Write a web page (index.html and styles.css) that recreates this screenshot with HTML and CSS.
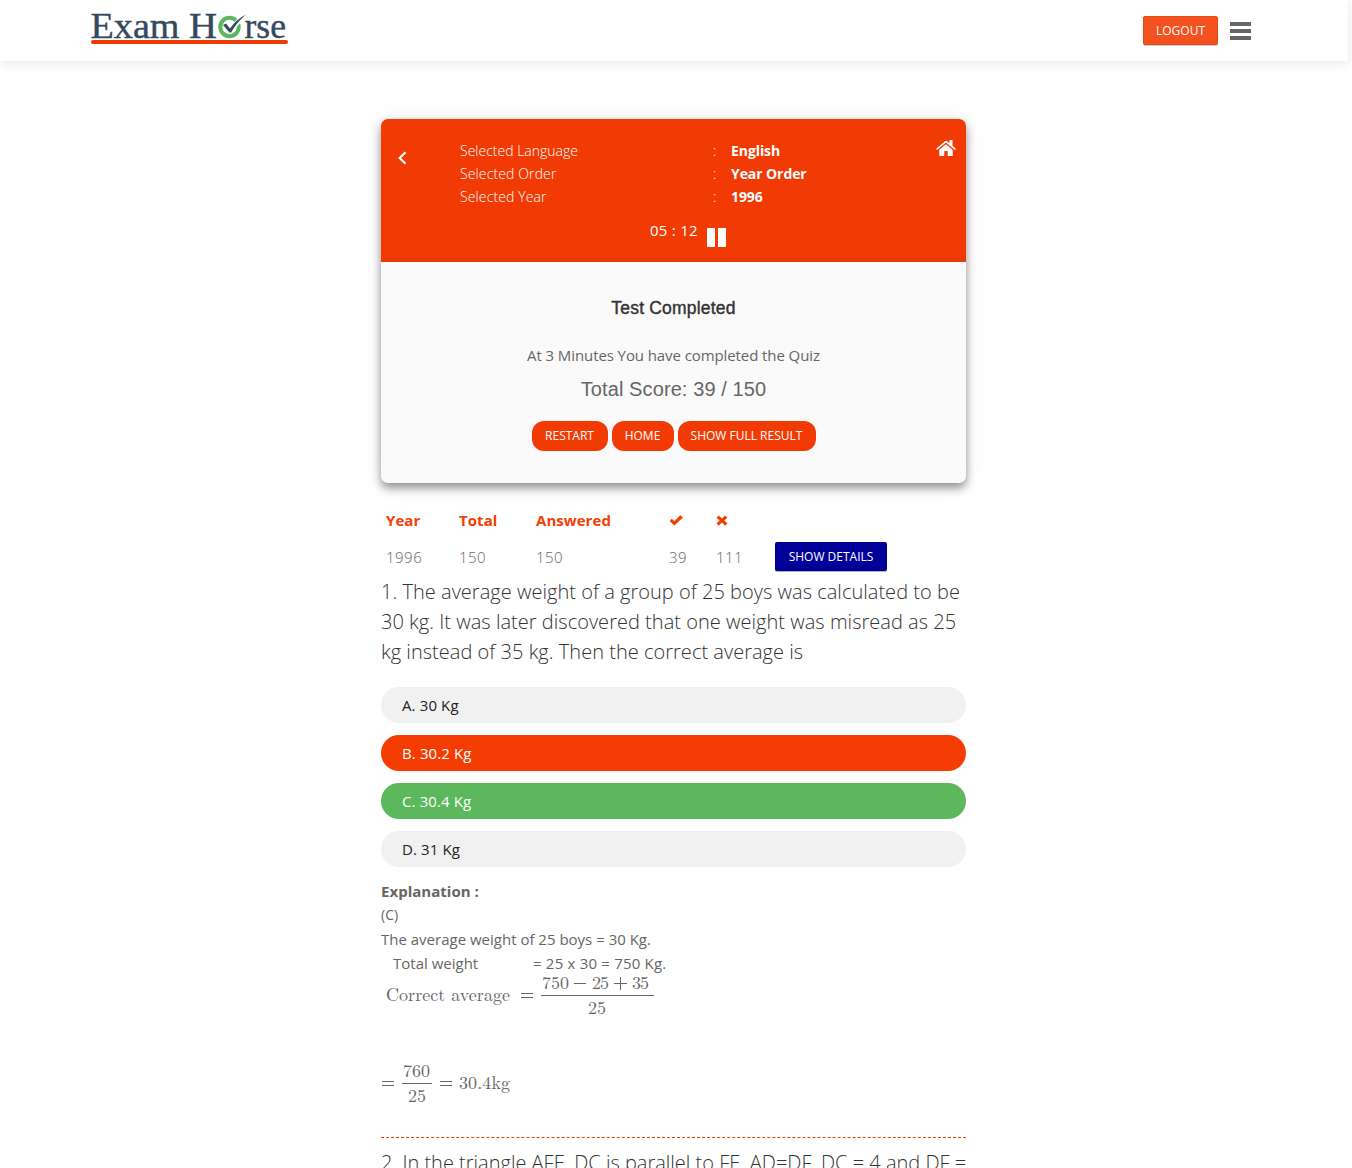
FILE: index.html
```html
<!DOCTYPE html>
<html lang="en">
<head>
<meta charset="utf-8">
<title>Exam Horse</title>
<link rel="stylesheet" href="styles.css">
</head>
<body>
<header class="topbar">
  <svg class="logo" width="200" height="38" viewBox="0 0 200 38" role="img" aria-label="Exam Horse">
    <g class="logo-text">
      <text x="-0.500" y="29.5" textLength="89" lengthAdjust="spacingAndGlyphs">Exam</text>
      <text x="98" y="29.5" textLength="28" lengthAdjust="spacingAndGlyphs">H</text>
      <text x="153.500" y="29.5" textLength="41.500" lengthAdjust="spacingAndGlyphs">rse</text>
    </g>
    <circle cx="138.5" cy="19" r="9.2" fill="none" stroke="#5cb85c" stroke-width="4"/>
    <path d="M141 20L154 6.500" stroke="#fff" stroke-width="5"/>
    <path d="M132 17l3-1.500 4 5Q145 11.500 155 6.500 146 14 140 24.500h-1.500z" fill="#34495e"/>
    <path d="M2 34H195" stroke="#f23a04" stroke-width="4" stroke-linecap="round"/>
  </svg>
  <div class="top-actions">
    <button class="btn logout">LOGOUT</button>
    <svg class="menu" width="21" height="18" viewBox="0 0 21 18"><path d="M0 0h21v4H0zM0 7h21v4H0zM0 14h21v4H0z" fill="#666"/></svg>
  </div>
</header>

<main class="content">
  <section class="card">
    <div class="card-head">
      <svg class="back" width="9" height="14" viewBox="0 0 9 14"><path d="M7.500 1.200L1.700 7l5.800 5.800" fill="none" stroke="#fff" stroke-width="2.200"/></svg>
      <div class="summary">
        <dl class="selection">
          <dt>Selected Language</dt><dd class="colon">:</dd><dd>English</dd>
          <dt class="wide">Selected Order</dt><dd class="colon">:</dd><dd>Year Order</dd>
          <dt class="wide">Selected Year</dt><dd class="colon">:</dd><dd>1996</dd>
        </dl>
        <div class="timer">
          <span>05 : 12</span>
          <svg width="20" height="19" viewBox="0 0 20 19"><path d="M0 0h8v18.500l-.5.5H.5l-.5-.5zM11 0h8v18.500l-.5.5h-7l-.5-.5z" fill="#fff"/></svg>
        </div>
      </div>
      <svg class="home" width="20" height="17" viewBox="0 0 20 17"><path d="M10 4.200l6.700 5.500V16h-5v-5H8.300v5h-5V9.700zM0 8.700L9 1.200q1-.8 2 0l2.500 2.100V0h3v5.800L20 8.700l-1 1.200-9-7.300-9 7.300z" fill="#fff"/></svg>
    </div>
    <div class="card-body">
      <h4>Test Completed</h4>
      <p class="done">At 3 Minutes You have completed the Quiz</p>
      <p class="score">Total Score: 39 / 150</p>
      <div class="actions">
        <button class="btn pill">RESTART</button>
        <button class="btn pill home-btn">HOME</button>
        <button class="btn pill full-btn">SHOW FULL RESULT</button>
      </div>
    </div>
  </section>

  <div class="results">
    <div class="row head">
      <span>Year</span><span>Total</span><span>Answered</span>
      <span><svg width="14" height="11" viewBox="0 0 14 11"><path d="M.6 6l2.200-2.200 2.500 2.400L11.300.3l2.700 2.200-8.700 8z" fill="#f53d03"/></svg></span>
      <span><svg width="12" height="11" viewBox="0 0 12 11"><path d="M.5 2.700L2.700.5 6 3.600 9.200.5l2.200 2.200-3.100 2.900 3.100 3L9.200 10.800 6 7.600 2.700 10.800.5 8.600l3.100-3z" fill="#f53d03"/></svg></span>
    </div>
    <div class="row">
      <span>1996</span><span>150</span><span>150</span><span>39</span><span>111</span>
      <button class="btn details">SHOW DETAILS</button>
    </div>
  </div>

  <article>
    <h2 class="question">1. The average weight of a group of 25 boys was calculated to be<br>30 kg. It was later discovered that one weight was misread as 25<br>kg instead of 35 kg. Then the correct average is</h2>
    <ul class="options">
      <li>A. 30 Kg</li>
      <li class="wrong">B. 30.2 Kg</li>
      <li class="right">C. 30.4 Kg</li>
      <li>D. 31 Kg</li>
    </ul>
    <div class="explanation">
      <p class="exp-title">Explanation :</p>
      <p class="exp-key">(C)</p>
      <p>The average weight of 25 boys = 30 Kg.</p>
      <p class="total"><span>Total weight</span><span class="sum">= 25 x 30 = 750 Kg.</span></p>
      <svg class="math" width="290" height="44" viewBox="0 0 290 44">
        <text x="5" y="26" textLength="124">Correct average</text>
        <path d="M140 18.500h12M140 22.500h12M160 20.500h113" stroke="#666"/>
        <text x="161" y="14" textLength="27">750</text>
        <path d="M193 8.500h12M233 8.500h13M239.500 2v13" stroke="#666"/>
        <text x="211" y="14" textLength="17">25</text>
        <text x="251" y="14" textLength="17">35</text>
        <text x="207" y="39" textLength="18">25</text>
      </svg>
      <svg class="math second" width="290" height="44" viewBox="0 0 290 44">
        <path d="M1 18.500h12M1 22.500h12M21 20.500h30M59 18.500h12M59 22.500h12" stroke="#666"/>
        <text x="22" y="14" textLength="27">760</text>
        <text x="27" y="39" textLength="18">25</text>
        <text x="78" y="26" textLength="51">30.4kg</text>
      </svg>
    </div>
  </article>

  <article class="next">
    <h2 class="question">2. In the triangle AFE, DC is parallel to FE, AD=DF, DC = 4 and DF =</h2>
  </article>
</main>
</body>
</html>
```
FILE: styles.css
```css
* { box-sizing: border-box; }
html { overflow: hidden; }
body {
  margin: 0;
  height: 1168px;
  overflow: hidden;
  background: #fff;
  color: #666;
  font: 400 15px/24px "Open Sans", "Noto Sans", sans-serif;
}
p, h2, h4, dl, dd, ul { margin: 0; padding: 0; }
svg { display: block; flex: none; }

.topbar {
  height: 61px;
  width: 1348px;
  padding: 8px 97px 0 91px;
  display: flex;
  justify-content: space-between;
  align-items: flex-start;
  box-shadow: 0 2px 10px rgba(0, 0, 0, .1);
}
.logo { overflow: visible; }
.logo-text { font: 36px "Liberation Serif", serif; fill: #34495e; stroke: #34495e; stroke-width: .4px; }
.top-actions { display: flex; align-items: center; gap: 12px; padding-top: 8px; }

.btn {
  display: block;
  border: 0;
  padding: 0;
  color: #fff;
  font: 400 12px/29px "Open Sans", "Noto Sans", sans-serif;
  text-align: center;
  white-space: nowrap;
}
.logout { width: 75px; height: 29px; background: #f4511e; border: 1px solid #e34a18; border-radius: 2px; line-height: 27px; box-shadow: 0 1px 0 rgba(0, 0, 0, .2); }

.content { width: 585px; margin: 58px 0 0 381px; white-space: nowrap; }

.card { height: 364px; border-radius: 7px; background: #fafafa; box-shadow: 0 5px 10px rgba(0, 0, 0, .42), 0 0 24px rgba(0, 0, 0, .06); }
.card-head {
  height: 143px;
  padding: 20px 10px 0 17px;
  display: flex;
  align-items: flex-start;
  border-radius: 7px 7px 0 0;
  background: linear-gradient(#f23b04 0 132px, #ec3903);
  color: #fff;
}
.back { margin-top: 12px; }
.home { margin: 1px 0 0 auto; }
.summary { margin-left: 53px; }
.selection { display: grid; grid-template-columns: 253px 18px auto; font-size: 14px; line-height: 23px; font-weight: 300; }
.selection dd { font-weight: 700; letter-spacing: -.08px; }
.selection .wide { letter-spacing: .12px; }
.selection .colon { font-weight: 300; }
.timer { display: flex; gap: 9px; margin: 10px 0 0 190px; font-size: 15px; letter-spacing: .27px; }
.timer svg { margin-top: 10px; }

.card-body { padding-top: 34px; text-align: center; }
.card-body h4 { font: 400 17.5px/24px "Liberation Sans", Arial, sans-serif; -webkit-text-stroke: .4px #333; color: #333; letter-spacing: .2px; }
.done { margin-top: 23px; font-size: 15px; letter-spacing: -.09px; }
.score { margin-top: 10px; font: 20px/24px "Liberation Sans", Arial, sans-serif; letter-spacing: .1px; }
.actions { display: flex; justify-content: center; gap: 4px; margin-top: 20px; }
.pill { width: 76px; height: 30px; padding-bottom: 1px; border-radius: 12px; background: #f23b04; line-height: 28px; }
.home-btn { width: 62px; }
.full-btn { width: 138px; }

.results { padding: 25px 5px 0; }
.row { display: grid; grid-template-columns: 73px 77px 133px 47px 59px 112px; align-items: center; height: 29px; letter-spacing: .5px; font-weight: 300; }
.row.head { height: 24px; margin-bottom: 10px; color: #f53d03; font-weight: 700; letter-spacing: .05px; }
.row.head svg { margin-top: 1px; }
.details { width: 112px; height: 29px; background: #009; border-radius: 2px; box-shadow: 0 1px 0 rgba(0, 0, 0, .3); }

.question { margin-top: 6px; color: #333; font-size: 20px; line-height: 30px; font-weight: 300; letter-spacing: .025px; }
.options { list-style: none; display: grid; gap: 12px; margin-top: 20px; }
.options li { height: 36px; padding-left: 21px; border-radius: 18px; background: #f1f1f1; color: #222; line-height: 36px; letter-spacing: .12px; }
.options .wrong { background: #f53d03; color: #fff; }
.options .right { background: #5cb85c; color: #fff; }

.explanation { height: 258px; margin-top: 12px; }
.exp-title { font-weight: 700; letter-spacing: .03px; }
.exp-key { font-size: 14px; }
.total { display: grid; grid-template-columns: 140px auto; padding-left: 12px; }
.sum { letter-spacing: .2px; }
.math { overflow: visible; font: 18px "Latin Modern Roman", "Liberation Serif", serif; fill: #666; shape-rendering: crispEdges; }
.second { margin-top: 44px; }
.next { border-top: 1px dashed #f23b04; }
.next .question { margin-top: 10px; letter-spacing: 0; }
```
